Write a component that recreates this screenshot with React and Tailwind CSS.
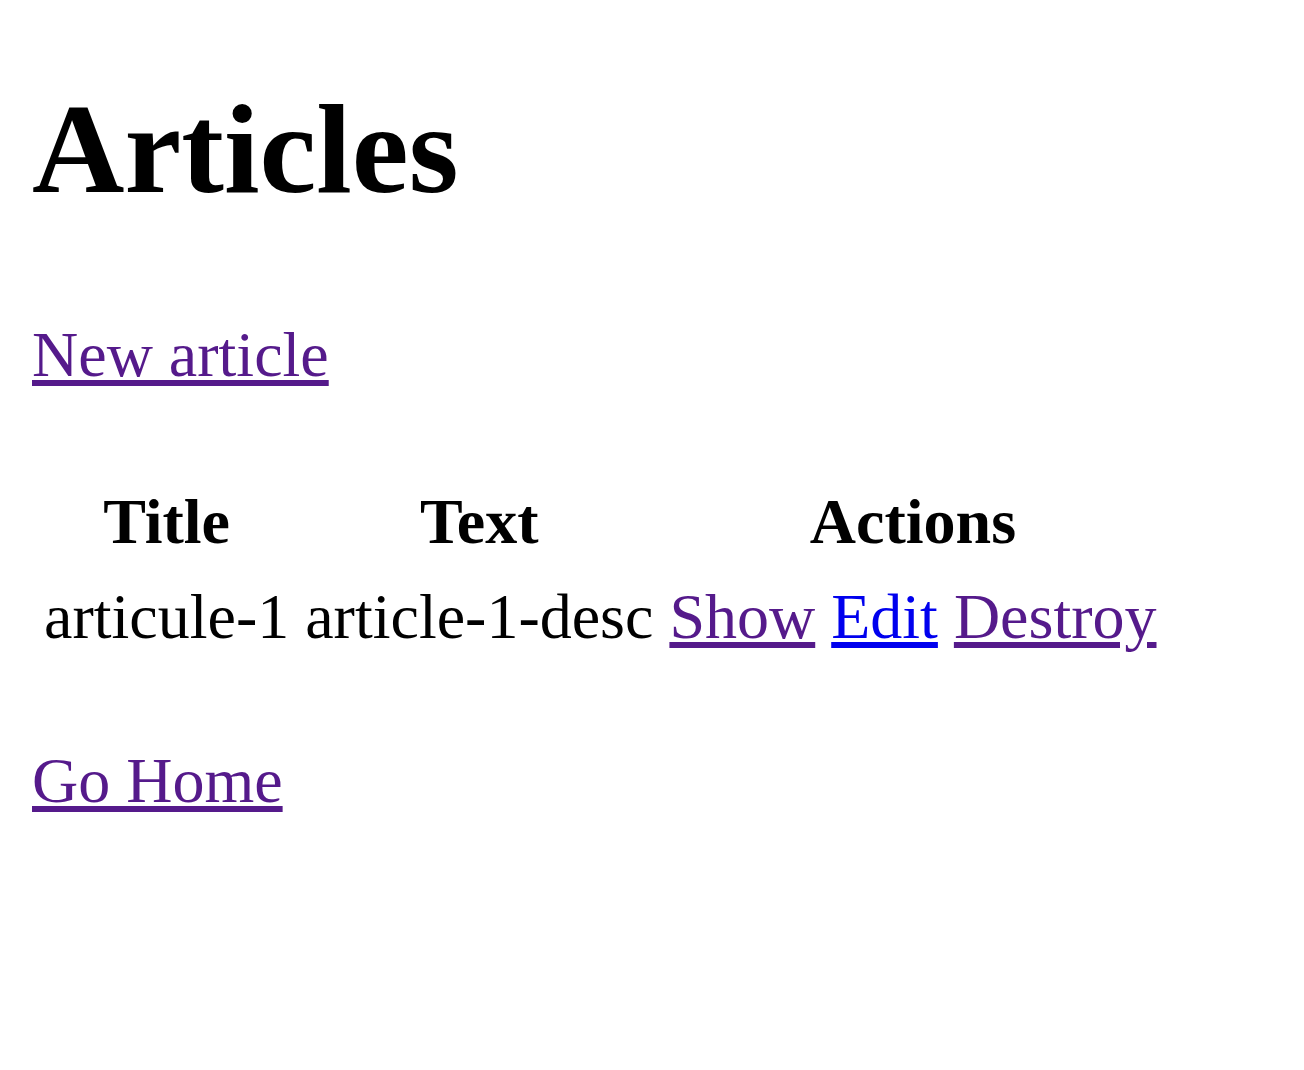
import React from "react";

const rows = [{ title: "articule-1", text: "article-1-desc" }];

function App() {
  return (
    <main className="min-h-screen bg-white px-[32px] pb-[32px] pt-[76px] font-['Liberation_Serif','Times_New_Roman',serif] text-[64px] leading-[73.6px] text-black">
      <h1 className="text-[128px] font-bold leading-[147.2px]">Articles</h1>

      <p className="mt-[95px]">
        <a href="#" className="text-[#551a8b] underline">
          New article
        </a>
      </p>

      <table className="mt-[78px] border-separate border-spacing-[8px]">
        <thead>
          <tr>
            <th className="px-[4px] py-[7px] text-center font-bold">Title</th>
            <th className="px-[4px] py-[7px] text-center font-bold">Text</th>
            <th colSpan={3} className="px-[4px] py-[7px] text-center font-bold">
              Actions
            </th>
          </tr>
        </thead>
        <tbody>
          {rows.map((r) => (
            <tr key={r.title}>
              <td className="px-[4px] py-[7px]">{r.title}</td>
              <td className="px-[4px] py-[7px]">{r.text}</td>
              <td className="px-[4px] py-[7px]">
                <a href="#" className="text-[#551a8b] underline">
                  Show
                </a>
              </td>
              <td className="px-[4px] py-[7px]">
                <a href="#" className="text-[#0000ee] underline">
                  Edit
                </a>
              </td>
              <td className="px-[4px] py-[7px]">
                <a href="#" className="text-[#551a8b] underline">
                  Destroy
                </a>
              </td>
            </tr>
          ))}
        </tbody>
      </table>

      <p className="mt-[75px]">
        <a href="#" className="text-[#551a8b] underline">
          Go Home
        </a>
      </p>
    </main>
  );
}

export default App;
